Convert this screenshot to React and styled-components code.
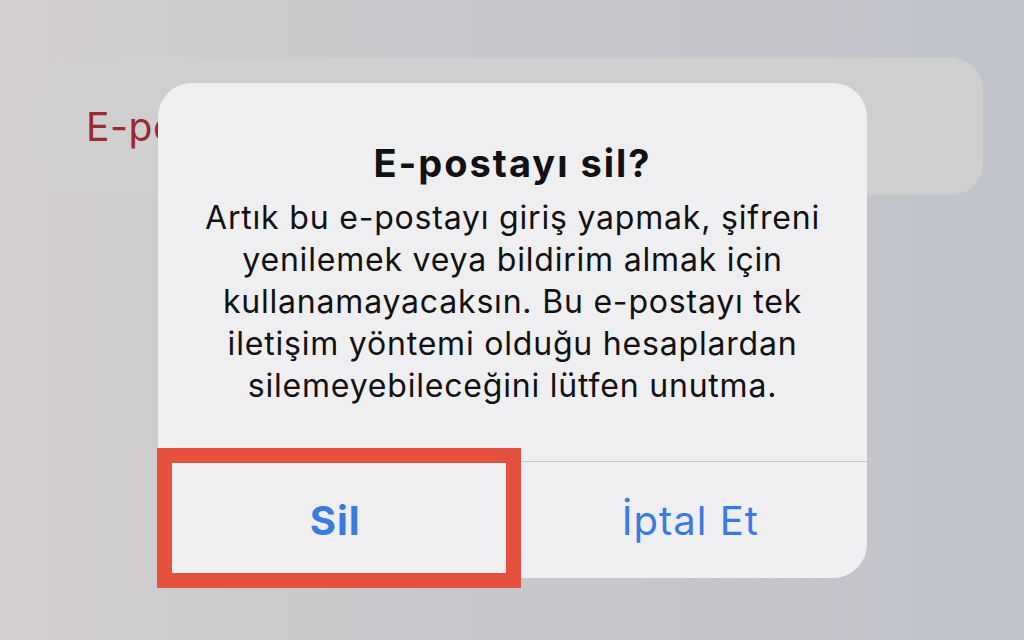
import styled, { createGlobalStyle } from 'styled-components'

const GlobalStyle = createGlobalStyle`
  html, body {
    margin: 0;
    padding: 0;
  }
  body {
    width: 1024px;
    height: 640px;
    overflow: hidden;
    font-family: Inter, "Noto Sans", "Liberation Sans", sans-serif;
  }
`

const Screen = styled.div`
  position: relative;
  width: 1024px;
  height: 640px;
  padding: 58px 41px 0 42px;
  box-sizing: border-box;
  background: linear-gradient(90deg, #d2cecd 0%, #c9c8cc 40%, #c1c4cb 100%);
`

const SettingsCard = styled.div`
  display: flex;
  align-items: center;
  height: 137px;
  padding: 0 44px;
  border-radius: 32px;
  background: #cfcfcf;
`

const DangerLabel = styled.span`
  font-size: 39px;
  color: #9a2a2f;
  letter-spacing: 0.6px;
`

const Alert = styled.div`
  position: absolute;
  left: 158px;
  top: 83px;
  width: 709px;
  height: 495px;
  display: flex;
  flex-direction: column;
  border-radius: 34px;
  background: #efeff1;
  overflow: hidden;
`

const AlertBody = styled.div`
  flex: 1;
  display: flex;
  flex-direction: column;
  align-items: center;
  padding: 54px 20px 0;
  text-align: center;
  color: #111;
`

const Title = styled.h2`
  margin: 0 0 8px;
  font-size: 38px;
  font-weight: 700;
  line-height: 52px;
  letter-spacing: 2px;
`

const Message = styled.p`
  margin: 0;
  font-size: 32px;
  line-height: 42px;
  font-weight: 400;
  letter-spacing: 0.8px;
`

const Actions = styled.div`
  display: grid;
  grid-template-columns: 1fr 1fr;
  height: 116px;
  border-top: 1.5px solid #c6c6c9;
`

const ActionButton = styled.button`
  border: 0;
  background: transparent;
  font-family: inherit;
  font-size: 40px;
  letter-spacing: 1px;
  font-weight: ${props => (props.$primary ? 700 : 400)};
  color: #3a7be0;
  & + & {
    border-left: 1.5px solid #c6c6c9;
  }
`

const Highlight = styled.div`
  position: absolute;
  left: 157px;
  top: 448px;
  width: 364px;
  height: 140px;
  box-sizing: border-box;
  border: 15px solid #e6503f;
`

function App () {
  return (
    <>
      <GlobalStyle />
      <Screen>
        <SettingsCard>
          <DangerLabel>E-postayı sil</DangerLabel>
        </SettingsCard>
        <Alert>
          <AlertBody>
            <Title>E-postayı sil?</Title>
            <Message>
              Artık bu e-postayı giriş yapmak, şifreni<br />
              yenilemek veya bildirim almak için<br />
              kullanamayacaksın. Bu e-postayı tek<br />
              iletişim yöntemi olduğu hesaplardan<br />
              silemeyebileceğini lütfen unutma.
            </Message>
          </AlertBody>
          <Actions>
            <ActionButton $primary>Sil</ActionButton>
            <ActionButton>İptal Et</ActionButton>
          </Actions>
        </Alert>
        <Highlight />
      </Screen>
    </>
  )
}

export default App
